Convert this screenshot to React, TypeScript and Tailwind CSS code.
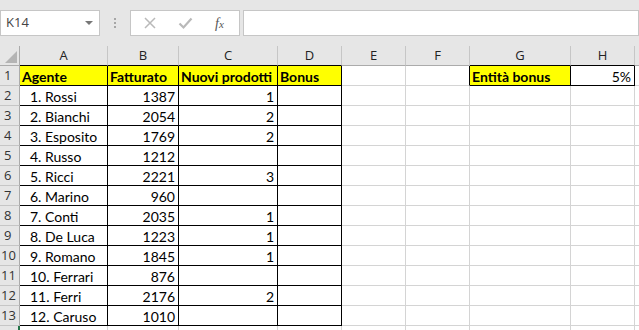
import React from 'react';

const cols = [
    { key: 'A', w: 'w-[88px]' },
    { key: 'B', w: 'w-[71px]' },
    { key: 'C', w: 'w-[99px]' },
    { key: 'D', w: 'w-[64px]' },
    { key: 'E', w: 'w-[64px]' },
    { key: 'F', w: 'w-[64px]' },
    { key: 'G', w: 'w-[101px]' },
    { key: 'H', w: 'w-[64px]' },
    { key: '', w: 'w-[64px]' },
];

type Cell = { v?: string; bold?: boolean; right?: boolean; indent?: boolean; yellow?: boolean; boxed?: boolean };

const agents: [string, string, string][] = [
    ['1. Rossi', '1387', '1'],
    ['2. Bianchi', '2054', '2'],
    ['3. Esposito', '1769', '2'],
    ['4. Russo', '1212', ''],
    ['5. Ricci', '2221', '3'],
    ['6. Marino', '960', ''],
    ['7. Conti', '2035', '1'],
    ['8. De Luca', '1223', '1'],
    ['9. Romano', '1845', '1'],
    ['10. Ferrari', '876', ''],
    ['11. Ferri', '2176', '2'],
    ['12. Caruso', '1010', ''],
];

const empty: Cell = {};

const rows: Cell[][] = [
    [
        { v: 'Agente', bold: true, yellow: true, boxed: true },
        { v: 'Fatturato', bold: true, yellow: true, boxed: true },
        { v: 'Nuovi prodotti', bold: true, yellow: true, boxed: true },
        { v: 'Bonus', bold: true, yellow: true, boxed: true },
        empty,
        empty,
        { v: 'Entità bonus', bold: true, yellow: true, boxed: true },
        { v: '5%', right: true, boxed: true },
        empty,
    ],
    ...agents.map(([a, b, c]) => [
        { v: a, indent: true, boxed: true },
        { v: b, right: true, boxed: true },
        { v: c, right: true, boxed: true },
        { boxed: true },
        empty,
        empty,
        empty,
        empty,
        empty,
    ]),
    cols.map(() => empty),
];

const App = () => {
    return (
        <div className="w-[639px] h-[330px] overflow-hidden bg-white font-['Lato','Open_Sans',sans-serif] text-[14px] text-black">
            {/* formula bar */}
            <div className="h-[46px] bg-[#e6e6e6] flex items-start pt-[10px]">
                <div className="w-[100px] h-[26px] bg-white border border-[#c6c6c6] flex items-center justify-between pl-[5px] pr-[6px]">
                    <span className="font-['Open_Sans',sans-serif] text-[13px] text-[#444]">K14</span>
                    <span className="w-0 h-0 border-l-[4px] border-r-[4px] border-t-[4px] border-l-transparent border-r-transparent border-t-[#777]" />
                </div>
                <div className="w-[30px] h-[26px] flex flex-col items-center justify-center gap-[2px]">
                    <span className="w-[2px] h-[2px] bg-[#a6a6a6]" />
                    <span className="w-[2px] h-[2px] bg-[#a6a6a6]" />
                    <span className="w-[2px] h-[2px] bg-[#a6a6a6]" />
                </div>
                <div className="w-[110px] h-[26px] bg-white border border-[#c6c6c6] flex items-center">
                    <svg className="ml-[12px]" width="14" height="14" viewBox="0 0 14 14" fill="none" stroke="#b9b9b9" strokeWidth="1.5">
                        <path d="M2 2l10 10M12 2L2 12" />
                    </svg>
                    <svg className="ml-[21px]" width="15" height="14" viewBox="0 0 15 14" fill="none" stroke="#b9b9b9" strokeWidth="2.2">
                        <path d="M1.5 7.5l4 4 8-9" />
                    </svg>
                    <span className="ml-[22px] font-['Liberation_Serif',serif] italic text-[14px] text-[#555]">
                        f<span className="text-[11px]">x</span>
                    </span>
                </div>
                <div className="ml-[3px] flex-1 h-[26px] bg-white border border-[#c6c6c6]" />
            </div>

            {/* column headers */}
            <div className="flex h-[20px] bg-[#e6e6e6]">
                <div className="w-[20px] shrink-0 border-r border-b border-[#ababab] relative">
                    <span className="absolute right-[2px] bottom-[2px] w-0 h-0 border-l-[12px] border-b-[12px] border-l-transparent border-b-[#b4b4b4]" />
                </div>
                {cols.map((c, i) => {
                    const boxed = rows[0][i].boxed;
                    return (
                        <div
                            key={i}
                            className={`${c.w} shrink-0 border-r border-r-[#c6c6c6] border-b ${boxed ? 'border-b-black' : 'border-b-[#ababab]'} flex items-center justify-center text-[#222] font-['Open_Sans',sans-serif] text-[13px]`}
                        >
                            {c.key}
                        </div>
                    );
                })}
            </div>

            {/* rows */}
            {rows.map((r, ri) => (
                <div key={ri} className="flex h-[20px]">
                    <div className={`w-[20px] shrink-0 bg-[#e6e6e6] border-r ${ri === 13 ? 'border-r-2 border-r-[#217346]' : 'border-r-[#ababab]'} border-b border-b-[#c6c6c6] flex items-center pl-[1px] font-['Open_Sans',sans-serif] text-[13px] text-[#333]`}>
                        {ri < 13 && <span className={ri + 1 < 10 ? 'pl-[3px]' : ''}>{ri + 1}</span>}
                    </div>
                    {r.map((cell, ci) => {
                        const nextBoxed = r[ci + 1]?.boxed;
                        const belowBoxed = rows[ri + 1]?.[ci]?.boxed;
                        const rb = cell.boxed || nextBoxed ? 'border-r-black' : 'border-r-[#d4d4d4]';
                        const bb = cell.boxed || belowBoxed ? 'border-b-black' : 'border-b-[#d4d4d4]';
                        return (
                            <div
                                key={ci}
                                className={`${cols[ci].w} shrink-0 border-r border-b ${rb} ${bb} ${cell.yellow ? 'bg-[#ffff00]' : ''} flex items-center overflow-hidden whitespace-nowrap leading-[19px] pt-[1px] ${cell.right ? 'justify-end pr-[3px]' : cell.indent ? 'pl-[10px]' : 'pl-[2px]'} ${cell.bold ? 'font-bold' : ''}`}
                            >
                                {cell.v}
                            </div>
                        );
                    })}
                </div>
            ))}
        </div>
    );
};

export default App;
